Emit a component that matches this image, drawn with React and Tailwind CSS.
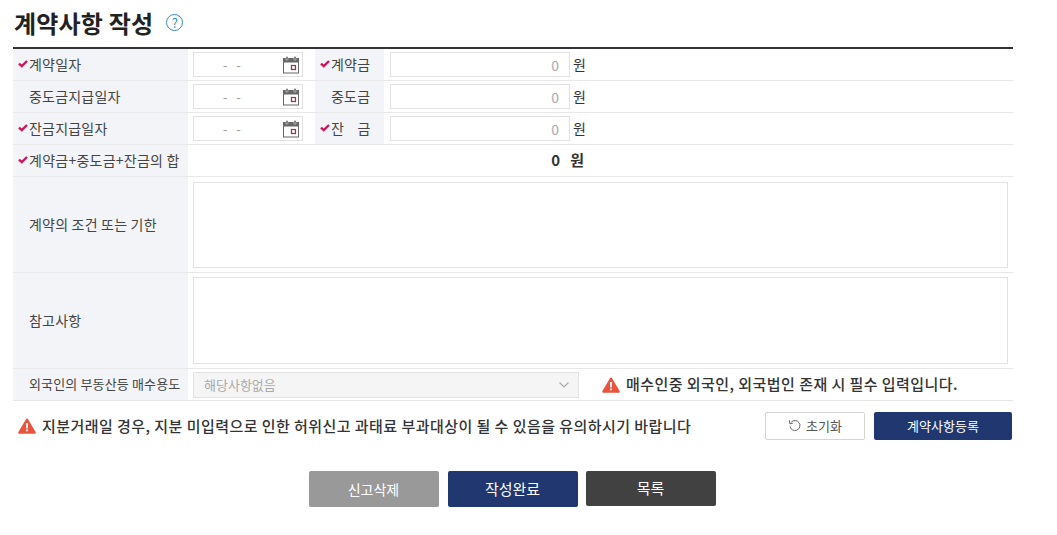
import React from "react";

const FONT = "font-['Malgun_Gothic','Noto_Sans_CJK_KR',sans-serif]";

function Check() {
  return (
    <svg width="10" height="8" viewBox="0 0 10 8" className="shrink-0 mr-px">
      <path d="M1 3.6l2.8 2.6L9 1" fill="none" stroke="#c9175a" strokeWidth="2.4" />
    </svg>
  );
}

function Calendar() {
  return (
    <svg width="18" height="18" viewBox="0 0 18 18" className="shrink-0">
      <rect x="1.5" y="2.5" width="15" height="14.5" fill="#fff" stroke="#666" strokeWidth="1" />
      <rect x="1" y="2.5" width="16" height="4" fill="#666" />
      <rect x="4" y="0.5" width="2" height="3.5" fill="#666" stroke="#fff" strokeWidth="0.4" />
      <rect x="12" y="0.5" width="2" height="3.5" fill="#666" stroke="#fff" strokeWidth="0.4" />
      <rect x="9.5" y="9.5" width="4" height="4" fill="#fff" stroke="#b3204f" strokeWidth="1.2" />
    </svg>
  );
}

function Warn() {
  return (
    <svg width="18" height="16" viewBox="0 0 18 16" className="shrink-0">
      <path d="M9 0.6c.5 0 .9.3 1.2.8l7.4 12.5c.5.9-.1 1.9-1.1 1.9H1.5c-1 0-1.6-1-1.1-1.9L7.8 1.4C8.1.9 8.5.6 9 .6z" fill="#e8543f" />
      <rect x="8.1" y="5" width="1.8" height="5.4" fill="#fff" />
      <rect x="8.1" y="11.5" width="1.8" height="1.8" fill="#fff" />
    </svg>
  );
}

function Label({ children, required, className = "w-[175px] pl-[5px]", text = "text-[14px] tracking-[0.2px]" }) {
  return (
    <div className={`${className} ${text} shrink-0 bg-[#f3f4f8] flex items-center text-[#444] self-stretch whitespace-pre pb-px`}>
      {required ? <Check /> : <span className="w-[11px] shrink-0" />}
      <span>{children}</span>
    </div>
  );
}

function DateInput() {
  return (
    <div className="ml-[5px] w-[110px] h-[25px] border border-[#e2e2e2] bg-white flex items-center pr-[2px]">
      <span className="ml-[29px] flex-1 text-[13px] text-[#999] whitespace-pre">-   -</span>
      <Calendar />
    </div>
  );
}

function Money() {
  return (
    <>
      <input
        readOnly
        value="0"
        className="ml-[6px] w-[180px] h-[25px] border border-[#e2e2e2] bg-white text-right pr-[10px] text-[14px] text-[#aaa] outline-none"
      />
      <span className="ml-[3px] text-[14px] text-[#333]">원</span>
    </>
  );
}

function DateRow({ l1, l2, r1, r2 }) {
  return (
    <div className="h-[32px] flex items-center border-b border-[#e8e8e8]">
      <Label required={r1}>{l1}</Label>
      <DateInput />
      <span className="w-[12px] shrink-0" />
      <Label required={r2} className="w-[69px] pl-[5px]">{l2}</Label>
      <Money />
    </div>
  );
}

function AreaRow({ label, h = "h-[86px]" }) {
  return (
    <div className="h-[96px] flex items-center border-b border-[#e8e8e8]">
      <Label>{label}</Label>
      <textarea readOnly className={`${h} ml-[5px] w-[815px] border border-[#e2e2e2] bg-white resize-none outline-none`} />
    </div>
  );
}

export default function App() {
  return (
    <div className={`${FONT} w-[1057px] h-[535px] bg-white overflow-hidden px-[13px] text-[#333]`}>
      <div className="h-[47px] flex items-center pb-[2px]">
        <h1 className="ml-px text-[24px] leading-none font-bold text-[#222] tracking-[0.2px]">계약사항 작성</h1>
        <span className="ml-[13px] w-[17px] h-[17px] rounded-full border border-[#2a8fc0] text-[#2a8fc0] text-[13px] leading-none flex items-center justify-center">?</span>
      </div>

      <div className="w-[1000px] border-t-2 border-[#333]">
        <DateRow l1="계약일자" l2="계약금" r1 r2 />
        <DateRow l1="중도금지급일자" l2="중도금" />
        <DateRow l1="잔금지급일자" l2={"잔    금"} r1 r2 />

        <div className="h-[32px] flex items-center border-b border-[#e8e8e8]">
          <Label required text="text-[14px] tracking-[0.25px]">계약금+중도금+잔금의 합</Label>
          <div className="w-[396px] text-right text-[15px] font-bold text-[#333] whitespace-pre">0   원</div>
        </div>

        <AreaRow label="계약의 조건 또는 기한" />
        <AreaRow label="참고사항" h="h-[87px]" />

        <div className="h-[32px] flex items-center border-b border-[#e8e8e8]">
          <Label text="text-[13px] tracking-[0.15px]">외국인의 부동산등 매수용도</Label>
          <div className="ml-[5px] w-[386px] h-[26px] border border-[#e2e2e2] bg-[#f5f5f5] flex items-center justify-between pl-[10px] pr-[8px] text-[13px] text-[#aaa]">
            <span>해당사항없음</span>
            <svg width="12" height="8" viewBox="0 0 12 8"><path d="M1.5 1.5L6 6l4.5-4.5" fill="none" stroke="#aaa" strokeWidth="1.2" /></svg>
          </div>
          <div className="ml-[23px] flex items-center gap-[6px] text-[15px] font-medium text-[#333] tracking-[0.45px]">
            <Warn />
            <span>매수인중 외국인, 외국법인 존재 시 필수 입력입니다.</span>
          </div>
        </div>
      </div>

      <div className="w-[1000px] mt-[11px] flex items-center">
        <div className="ml-[5px] flex items-center gap-[6px] text-[15px] font-medium text-[#333] tracking-[0.45px]">
          <Warn />
          <span>지분거래일 경우, 지분 미입력으로 인한 허위신고 과태료 부과대상이 될 수 있음을 유의하시기 바랍니다</span>
        </div>
        <button className="ml-auto w-[100px] h-[28px] border border-[#d5d5d5] rounded-[2px] bg-white text-[13px] text-[#555] flex items-center justify-center gap-[4px]">
          <svg width="14" height="14" viewBox="0 0 14 14">
            <path d="M3.2 3.2A5 5 0 1 1 2 7.4" fill="none" stroke="#666" strokeWidth="1" />
            <path d="M1.6 1.2v3.2h3.2" fill="none" stroke="#666" strokeWidth="1" />
          </svg>
          초기화
        </button>
        <button className="ml-[9px] mr-px w-[138px] h-[28px] rounded-[2px] bg-[#20376f] text-[13px] text-white">계약사항등록</button>
      </div>

      <div className="mt-[31px] flex justify-center items-start w-[1000px] pr-[2px]">
        <button className="w-[130px] h-[36px] rounded-[2px] bg-[#999999] text-[14px] text-white">신고삭제</button>
        <button className="ml-[9px] w-[130px] h-[36px] rounded-[2px] bg-[#20376f] text-[15px] text-white">작성완료</button>
        <button className="ml-[8px] w-[130px] h-[35px] rounded-[2px] bg-[#414141] text-[15px] text-white">목록</button>
      </div>
    </div>
  );
}
